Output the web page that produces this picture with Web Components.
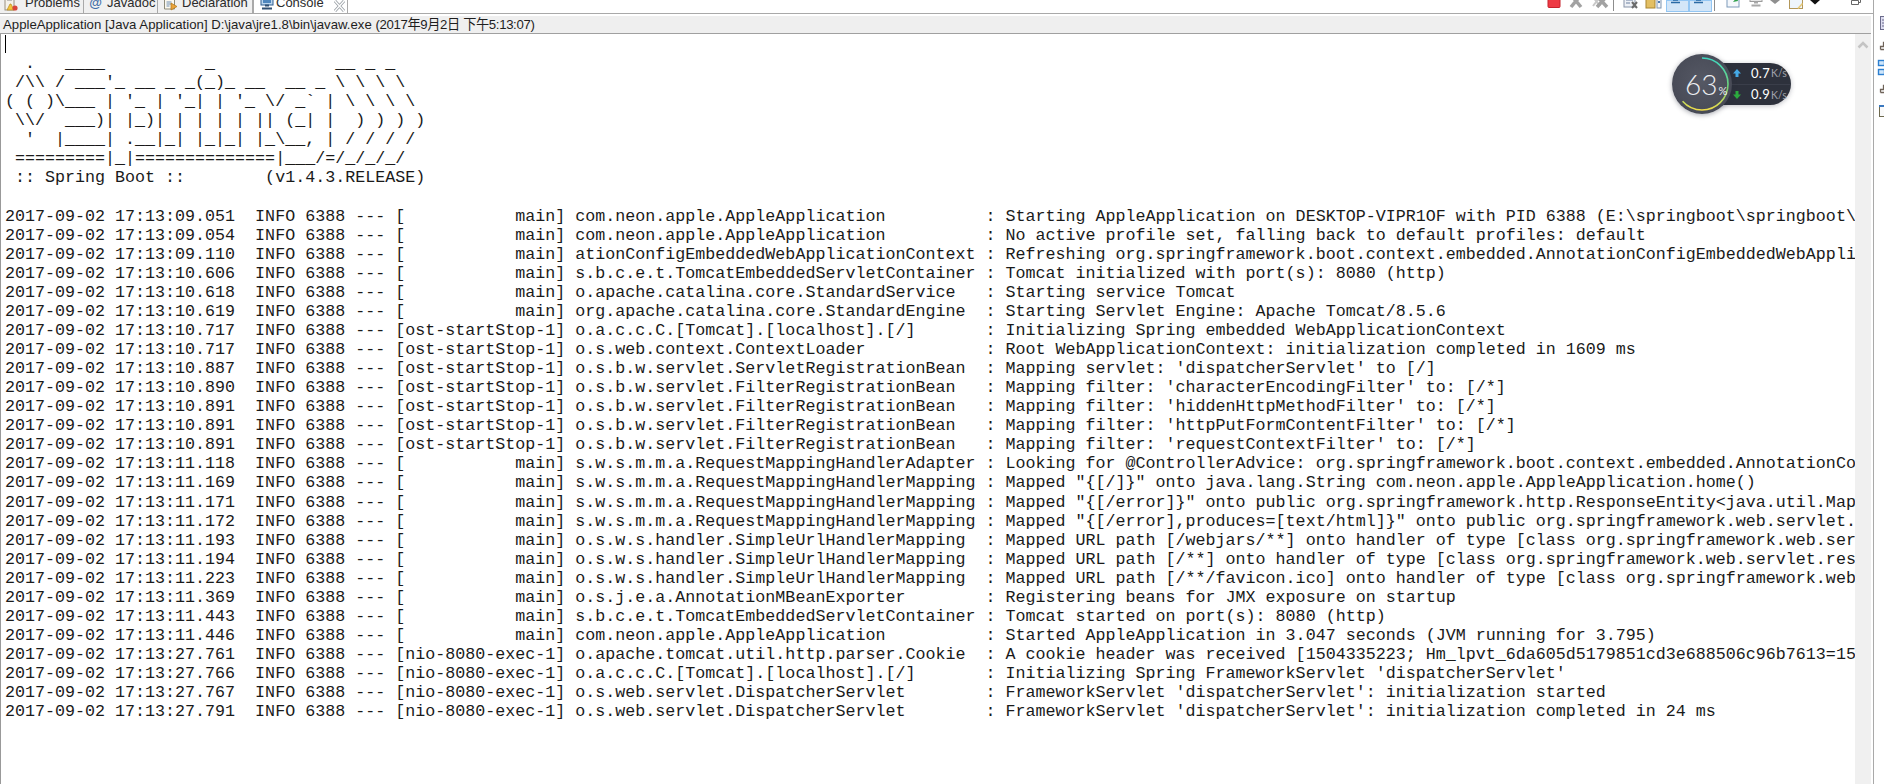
<!DOCTYPE html>
<html lang="en">
<head>
<meta charset="utf-8">
<title>Console</title>
<style>
    html, body { margin: 0; padding: 0; background: #fff; overflow: hidden; }
</style>
</head>
<body>
<ide-app>
    <view-tabs slot="tabs">
        <view-tab slot="tabs" w="84" pad="4" gap="7"><svg slot="icon" width="14" height="16" viewBox="0 0 14 16"><rect x="1" y="0" width="9" height="15" fill="#f4f1ea" stroke="#9a8f80"/><path d="M3 3h5M3 5h5" stroke="#8a8a8a"/><path d="M3 15l3-6h1l3 6z" fill="#f3c33c" stroke="#b58a1e" stroke-width=".7"/><circle cx="11" cy="13" r="2.6" fill="#d8453a"/></svg>Problems</view-tab>
        <view-tab slot="tabs" w="74" pad="5" gap="5"><span slot="icon" class="at" style="color:#3f6fa8;font:bold 13px/18px 'Liberation Sans',sans-serif;width:13px;display:block;text-align:center;margin-bottom:4px">@</span>Javadoc</view-tab>
        <view-tab slot="tabs" w="95" pad="5" gap="4"><svg slot="icon" width="15" height="16" viewBox="0 0 15 16"><path d="M1.500 1h7l3 3v10h-10z" fill="#fbf8ee" stroke="#8d8a78"/><path d="M3.500 7h5M3.500 9h5M3.500 11h3" stroke="#6f8fb5"/><path d="M8 8l6 3.500-6 3.500z" fill="#eaa43c" stroke="#b27516" stroke-width=".7"/></svg>Declaration</view-tab>
        <view-tab slot="tabs" w="95" pad="6" gap="2" active close><svg slot="icon" width="14" height="16" viewBox="0 0 14 16"><rect x="1" y="0" width="12" height="10" fill="#bcd6ee" stroke="#2f5f92"/><rect x="3" y="2" width="8" height="6" fill="#4e86bd"/><path d="M5 10.500h4M2 13.500h10" stroke="#2f4f72" stroke-width="2"/></svg>Console</view-tab>
    </view-tabs>
    <view-toolbar slot="tabs">
        <tool-icon><svg width="16" height="16" viewBox="0 0 16 16"><rect x="2" y="0" width="12" height="14.500" rx="1" fill="#ee3a44" stroke="#c5222c"/></svg></tool-icon>
        <tool-icon><svg width="16" height="16" viewBox="0 0 16 16"><path d="M3 2l10 12M13 2L3 14" stroke="#a2a2a2" stroke-width="3.500"/></svg></tool-icon>
        <tool-icon style="margin-left:2px"><svg width="18" height="16" viewBox="0 0 18 16"><path d="M2 4l7 9M9 4l-7 9" stroke="#c8c8c8" stroke-width="2"/><path d="M6 3l10 11M16 3L6 14" stroke="#a2a2a2" stroke-width="3.500"/></svg></tool-icon>
        <tool-sep></tool-sep>
        <tool-icon style="margin-left:4px"><svg width="16" height="16" viewBox="0 0 16 16"><rect x="1" y="0" width="11" height="14" fill="#eef1f6" stroke="#8793a8"/><path d="M3 4h7M3 7h7M3 10h4" stroke="#6d80a0"/><path d="M9 9l5 6M14 9l-5 6" stroke="#6b6b6b" stroke-width="2"/></svg></tool-icon>
        <tool-icon><svg width="17" height="17" viewBox="0 0 17 17"><rect x="1" y="6" width="9" height="9" fill="#e3bf63" stroke="#a98530"/><path d="M3 7V4a2.500 2.500 0 0 1 5 0v3" fill="none" stroke="#9a9a9a" stroke-width="1.300"/><rect x="12" y="0" width="4" height="15" fill="#f2f5f9" stroke="#7f93ad"/><rect x="13" y="8" width="2" height="2" fill="#4f7bb0"/></svg></tool-icon>
        <tool-icon active style="margin-left:2px"><svg width="17" height="16" viewBox="0 0 17 16"><rect x="1" y="-4" width="11" height="9" fill="#cfe4f7" stroke="#2f6da6"/><rect x="6" y="-6" width="10" height="7" fill="#eef4fb" stroke="#6f97bf"/><path d="M4 7h5M2 9.500h9" stroke="#2a6aa5" stroke-width="1.600"/></svg></tool-icon>
        <tool-icon active><svg width="17" height="16" viewBox="0 0 17 16"><rect x="1" y="-4" width="11" height="9" fill="#cfe4f7" stroke="#2f6da6"/><rect x="6" y="-6" width="10" height="7" fill="#eef4fb" stroke="#6f97bf"/><rect x="8" y="-3" width="6" height="4" fill="#e0353f"/><path d="M4 7h5M2 9.500h9" stroke="#2a6aa5" stroke-width="1.600"/></svg></tool-icon>
        <tool-sep></tool-sep>
        <tool-icon style="margin-left:5px"><svg width="16" height="16" viewBox="0 0 16 16"><rect x="2" y="-2" width="12" height="16" fill="#f5f8fc" stroke="#7d9ab9"/><rect x="2" y="-2" width="12" height="9" fill="#3c8ccf"/><path d="M8 9l4-5 1 4z" fill="#2fa04a"/></svg></tool-icon>
        <tool-icon style="margin-left:1px"><svg width="16" height="16" viewBox="0 0 16 16"><rect x="2" y="0" width="12" height="8.500" fill="#e6e6e6" stroke="#9c9c9c"/><path d="M6 9.500h4M3.500 12.500h9" stroke="#a8a8a8" stroke-width="2"/></svg></tool-icon>
        <tool-icon w="16"><svg width="10" height="16" viewBox="0 0 10 16"><path d="M0 7h10L5 11z" fill="#8f8f8f"/></svg></tool-icon>
        <tool-icon style="margin-left:2px"><svg width="16" height="16" viewBox="0 0 16 16"><rect x="1.500" y="-2" width="13" height="17.500" fill="#eef5fc" stroke="#b3975a"/><path d="M10 15.500l4.500-5" stroke="#e5c878" stroke-width="1.500"/></svg></tool-icon>
        <tool-icon w="16"><svg width="10" height="16" viewBox="0 0 10 16"><path d="M0 7h10L5 11.500z" fill="#111"/></svg></tool-icon>
        <tool-icon style="margin-left:22px"><svg width="10" height="16" viewBox="0 0 10 16"><path d="M.500 7.500h7v4h-7z" fill="#fff" stroke="#666"/><path d="M3 7V5.500h6.500v4H7.500" fill="none" stroke="#666"/></svg></tool-icon>
    </view-toolbar>
    <console-bar slot="bar">AppleApplication [Java Application] D:\java\jre1.8\bin\javaw.exe <span style="letter-spacing:-.35px">(2017年9月2日 下午5:13:07)</span></console-bar>
    <console-output slot="output">
        <log-text>  .   ____          _            __ _ _</log-text>
        <log-text> /\\ / ___'_ __ _ _(_)_ __  __ _ \ \ \ \</log-text>
        <log-text>( ( )\___ | '_ | '_| | '_ \/ _` | \ \ \ \</log-text>
        <log-text> \\/  ___)| |_)| | | | | || (_| |  ) ) ) )</log-text>
        <log-text>  '  |____| .__|_| |_|_| |_\__, | / / / /</log-text>
        <log-text> =========|_|==============|___/=/_/_/_/</log-text>
        <log-text> :: Spring Boot ::        (v1.4.3.RELEASE)</log-text>
        <log-text></log-text>
        <log-line t="2017-09-02 17:13:09.051" th="main" lg="com.neon.apple.AppleApplication">Starting AppleApplication on DESKTOP-VIPR1OF with PID 6388 (E:\springboot\springboot\</log-line>
        <log-line t="2017-09-02 17:13:09.054" th="main" lg="com.neon.apple.AppleApplication">No active profile set, falling back to default profiles: default</log-line>
        <log-line t="2017-09-02 17:13:09.110" th="main" lg="ationConfigEmbeddedWebApplicationContext">Refreshing org.springframework.boot.context.embedded.AnnotationConfigEmbeddedWebAppli</log-line>
        <log-line t="2017-09-02 17:13:10.606" th="main" lg="s.b.c.e.t.TomcatEmbeddedServletContainer">Tomcat initialized with port(s): 8080 (http)</log-line>
        <log-line t="2017-09-02 17:13:10.618" th="main" lg="o.apache.catalina.core.StandardService">Starting service Tomcat</log-line>
        <log-line t="2017-09-02 17:13:10.619" th="main" lg="org.apache.catalina.core.StandardEngine">Starting Servlet Engine: Apache Tomcat/8.5.6</log-line>
        <log-line t="2017-09-02 17:13:10.717" th="ost-startStop-1" lg="o.a.c.c.C.[Tomcat].[localhost].[/]">Initializing Spring embedded WebApplicationContext</log-line>
        <log-line t="2017-09-02 17:13:10.717" th="ost-startStop-1" lg="o.s.web.context.ContextLoader">Root WebApplicationContext: initialization completed in 1609 ms</log-line>
        <log-line t="2017-09-02 17:13:10.887" th="ost-startStop-1" lg="o.s.b.w.servlet.ServletRegistrationBean">Mapping servlet: 'dispatcherServlet' to [/]</log-line>
        <log-line t="2017-09-02 17:13:10.890" th="ost-startStop-1" lg="o.s.b.w.servlet.FilterRegistrationBean">Mapping filter: 'characterEncodingFilter' to: [/*]</log-line>
        <log-line t="2017-09-02 17:13:10.891" th="ost-startStop-1" lg="o.s.b.w.servlet.FilterRegistrationBean">Mapping filter: 'hiddenHttpMethodFilter' to: [/*]</log-line>
        <log-line t="2017-09-02 17:13:10.891" th="ost-startStop-1" lg="o.s.b.w.servlet.FilterRegistrationBean">Mapping filter: 'httpPutFormContentFilter' to: [/*]</log-line>
        <log-line t="2017-09-02 17:13:10.891" th="ost-startStop-1" lg="o.s.b.w.servlet.FilterRegistrationBean">Mapping filter: 'requestContextFilter' to: [/*]</log-line>
        <log-line t="2017-09-02 17:13:11.118" th="main" lg="s.w.s.m.m.a.RequestMappingHandlerAdapter">Looking for @ControllerAdvice: org.springframework.boot.context.embedded.AnnotationCo</log-line>
        <log-line t="2017-09-02 17:13:11.169" th="main" lg="s.w.s.m.m.a.RequestMappingHandlerMapping">Mapped "{[/]}" onto java.lang.String com.neon.apple.AppleApplication.home()</log-line>
        <log-line t="2017-09-02 17:13:11.171" th="main" lg="s.w.s.m.m.a.RequestMappingHandlerMapping">Mapped "{[/error]}" onto public org.springframework.http.ResponseEntity&lt;java.util.Map</log-line>
        <log-line t="2017-09-02 17:13:11.172" th="main" lg="s.w.s.m.m.a.RequestMappingHandlerMapping">Mapped "{[/error],produces=[text/html]}" onto public org.springframework.web.servlet.</log-line>
        <log-line t="2017-09-02 17:13:11.193" th="main" lg="o.s.w.s.handler.SimpleUrlHandlerMapping">Mapped URL path [/webjars/**] onto handler of type [class org.springframework.web.ser</log-line>
        <log-line t="2017-09-02 17:13:11.194" th="main" lg="o.s.w.s.handler.SimpleUrlHandlerMapping">Mapped URL path [/**] onto handler of type [class org.springframework.web.servlet.res</log-line>
        <log-line t="2017-09-02 17:13:11.223" th="main" lg="o.s.w.s.handler.SimpleUrlHandlerMapping">Mapped URL path [/**/favicon.ico] onto handler of type [class org.springframework.web</log-line>
        <log-line t="2017-09-02 17:13:11.369" th="main" lg="o.s.j.e.a.AnnotationMBeanExporter">Registering beans for JMX exposure on startup</log-line>
        <log-line t="2017-09-02 17:13:11.443" th="main" lg="s.b.c.e.t.TomcatEmbeddedServletContainer">Tomcat started on port(s): 8080 (http)</log-line>
        <log-line t="2017-09-02 17:13:11.446" th="main" lg="com.neon.apple.AppleApplication">Started AppleApplication in 3.047 seconds (JVM running for 3.795)</log-line>
        <log-line t="2017-09-02 17:13:27.761" th="nio-8080-exec-1" lg="o.apache.tomcat.util.http.parser.Cookie">A cookie header was received [1504335223; Hm_lpvt_6da605d5179851cd3e688506c96b7613=15</log-line>
        <log-line t="2017-09-02 17:13:27.766" th="nio-8080-exec-1" lg="o.a.c.c.C.[Tomcat].[localhost].[/]">Initializing Spring FrameworkServlet 'dispatcherServlet'</log-line>
        <log-line t="2017-09-02 17:13:27.767" th="nio-8080-exec-1" lg="o.s.web.servlet.DispatcherServlet">FrameworkServlet 'dispatcherServlet': initialization started</log-line>
        <log-line t="2017-09-02 17:13:27.791" th="nio-8080-exec-1" lg="o.s.web.servlet.DispatcherServlet">FrameworkServlet 'dispatcherServlet': initialization completed in 24 ms</log-line>
    </console-output>
    <side-strip slot="side"></side-strip>
    <net-gauge slot="gauge" percent="63" up="0.7" down="0.9"></net-gauge>
</ide-app>

<script>
/* Cada elemento sigue el mismo esquema: getTemplate() + getStyles() + render() */
class BaseElement extends HTMLElement {
    constructor() {
        super();
        this.attachShadow({ mode: "open" });
    }
    getTemplate() {
        const template = document.createElement("template");
        template.innerHTML = `${this.getMarkup()}<style>${this.getStyles()}</style>`;
        return template;
    }
    getMarkup() {
        return `<slot></slot>`;
    }
    getStyles() {
        return ``;
    }
    render() {
        this.shadowRoot.appendChild(this.getTemplate().content.cloneNode(true));
    }
    connectedCallback() {
        this.render();
    }
}

class IdeApp extends BaseElement {
    getMarkup() {
        return `
            <div class="main">
                <div class="top"><slot name="tabs"></slot></div>
                <slot name="bar"></slot>
                <slot name="output"></slot>
            </div>
            <slot name="side"></slot>
            <slot name="gauge"></slot>
        `;
    }
    getStyles() {
        return `
            :host { display: flex; position: relative; width: 1884px; height: 784px; overflow: hidden; background: #fff; }
            .main { flex: 1; min-width: 0; display: flex; flex-direction: column; }
            .top { display: flex; justify-content: space-between; height: 13px; border-bottom: 1px solid #a9a9a9; background: #fff; }
        `;
    }
}

class ViewTabs extends BaseElement {
    getMarkup() {
        return `<slot name="tabs"></slot>`;
    }
    getStyles() {
        return `:host { display: flex; height: 13px; overflow: hidden; }`;
    }
}

class ViewTab extends BaseElement {
    getMarkup() {
        const close = this.hasAttribute("close")
            ? `<svg class="close" width="13" height="16" viewBox="0 0 13 16"><path d="M2 1l9 10M11 1L2 11" stroke="#9aa0a6" stroke-width="3"/><path d="M2 1l9 10M11 1L2 11" stroke="#fff" stroke-width="1.300"/></svg>`
            : ``;
        return `<span class="ico"><slot name="icon"></slot></span><span class="txt"><slot></slot></span>${close}`;
    }
    getStyles() {
        const w = this.getAttribute("w");
        const pad = this.getAttribute("pad");
        const gap = this.getAttribute("gap");
        const active = this.hasAttribute("active");
        return `
            :host {
                display: flex; align-items: flex-end; box-sizing: border-box; flex: none; width: ${w}px; height: 13px;
                padding-left: ${pad}px; gap: ${gap}px; background: ${active ? "#fff" : "#f0f0f0"};
                border-right: 1px solid #a9a9a9; ${active ? "border-left: 1px solid #a9a9a9;" : ""}
                font: 13px/18px "Liberation Sans", sans-serif; color: #2b2b2b; white-space: nowrap;
            }
            .ico { display: block; flex: none; margin-bottom: -3px; }
            .txt { display: block; margin-bottom: 1px; }
            .close { flex: none; margin-left: 7px; margin-bottom: -3px; }
        `;
    }
}

class ViewToolbar extends BaseElement {
    getStyles() {
        return `:host { display: flex; height: 13px; overflow: hidden; padding-right: 6px; }`;
    }
}

class ToolIcon extends BaseElement {
    getMarkup() {
        return `<slot></slot>`;
    }
    getStyles() {
        const w = this.getAttribute("w") || (this.hasAttribute("active") ? 23 : 22);
        const active = this.hasAttribute("active");
        return `
            :host {
                display: flex; justify-content: center; box-sizing: border-box; flex: none; width: ${w}px; height: ${active ? 12 : 13}px;
                ${active ? "background: #d3e6f8; box-shadow: inset 0 0 0 1px #93c6f3;" : ""}
            }
            ::slotted(svg) { display: block; margin-top: -7px; flex: none; overflow: visible; }
        `;
    }
}

class ToolSep extends BaseElement {
    getMarkup() {
        return ``;
    }
    getStyles() {
        return `:host { display: block; flex: none; width: 1px; height: 11px; margin: 0 2px; background: #8d8d8d; }`;
    }
}

class ConsoleBar extends BaseElement {
    getStyles() {
        return `
            :host {
                display: block; box-sizing: border-box; height: 20px; margin-right: 2px; padding-left: 3px;
                background: linear-gradient(#fff 0 2px, #efefef 2px); border-bottom: 1px solid #a0a0a0;
                font: 13.2px/22px "Liberation Sans", "Noto Sans CJK SC", sans-serif; color: #1e1e1e; white-space: nowrap; overflow: hidden;
            }
        `;
    }
}

class ConsoleOutput extends BaseElement {
    getMarkup() {
        return `
            <div class="text">
                <div class="first"><i></i></div>
                <slot></slot>
            </div>
            <div class="bar"><svg width="16" height="14" viewBox="0 0 16 14"><path d="M3.500 9.500L8 5l4.500 4.500" fill="none" stroke="#c4c4c4" stroke-width="2.500"/></svg></div>
        `;
    }
    getStyles() {
        return `
            :host {
                display: flex; flex: 1; min-height: 0; padding-right: 2px; border-left: 1px solid #999;
                font: 16.68px/19.07px "Liberation Mono", monospace; color: #1a1a1a;
            }
            .text { flex: 1; min-width: 0; overflow: hidden; padding: 1px 0 0 4px; }
            .first { height: 19.07px; }
            .first i { display: block; width: 1px; height: 18px; background: #000; }
            .bar { flex: none; width: 16px; background: #f0f0f0; padding-top: 4px; }
            .bar svg { display: block; }
        `;
    }
}

class LogText extends BaseElement {
    getStyles() {
        return `:host { display: block; height: 19.07px; white-space: pre; }`;
    }
}

class LogLine extends BaseElement {
    getMarkup() {
        const t = this.getAttribute("t");
        const th = this.getAttribute("th").padStart(15, " ");
        const lg = this.getAttribute("lg").padEnd(40, " ");
        return `<span>${t}  INFO 6388 --- [${th}] ${lg} : </span><slot></slot>`;
    }
    getStyles() {
        return `:host { display: block; height: 19.07px; white-space: pre; }`;
    }
}

class SideStrip extends BaseElement {
    getMarkup() {
        return `
            <svg width="10" height="125" viewBox="0 0 10 125">
                <rect x="6.500" y="16.500" width="8" height="13" fill="#dcdcf0" stroke="#6a6a8a"/>
                <path d="M8 20h5M8 23h5M8 26h5" stroke="#6a6a8a"/>
                <path d="M6.500 49.500v-3h3v-4h4M6.500 49.500h8" fill="none" stroke="#6e6258" stroke-width="1.300"/>
                <rect x="4.500" y="60.500" width="6" height="5" fill="#cfe6fb" stroke="#2c7fd0" stroke-width="1.400"/>
                <rect x="4.500" y="69.500" width="6" height="5" fill="#cfe6fb" stroke="#2c7fd0" stroke-width="1.400"/>
                <path d="M6.500 92.500v-3h3v-4h4M6.500 92.500h8" fill="none" stroke="#6e6258" stroke-width="1.300"/>
                <rect x="5.500" y="105.500" width="8" height="11" fill="#fafafa" stroke="#6e6a50"/>
                <rect x="5" y="105" width="9" height="2" fill="#3a78bf"/>
            </svg>
        `;
    }
    getStyles() {
        return `
            :host { display: block; flex: none; box-sizing: border-box; width: 11px; height: 784px; border-left: 1px solid #a9a9a9; overflow: hidden; background: #fff; }
            svg { display: block; }
        `;
    }
}

class NetGauge extends BaseElement {
    getMarkup() {
        const pct = Number(this.getAttribute("percent"));
        const c = 2 * Math.PI * 26;
        return `
            <div class="pill">
                <div class="row"><svg width="10" height="10" viewBox="0 0 10 10"><path d="M5 1l4 4.500H6.500V9h-3V5.500H1z" fill="#45a9e6"/></svg><b>${this.getAttribute("up")}</b><em>K/s</em></div>
                <div class="row"><svg width="10" height="10" viewBox="0 0 10 10"><path d="M5 9l4-4.500H6.500V1h-3v3.500H1z" fill="#2cab3e"/></svg><b>${this.getAttribute("down")}</b><em>K/s</em></div>
            </div>
            <div class="dial">
                <svg width="60" height="60" viewBox="0 0 60 60">
                    <defs><linearGradient id="ring" x1="1" y1="0" x2="0" y2="0">
                        <stop offset="0" stop-color="#3fd6c0"/><stop offset=".55" stop-color="#6fd27a"/><stop offset="1" stop-color="#efdc4a"/>
                    </linearGradient></defs>
                    <circle cx="30" cy="30" r="26" fill="none" stroke="url(#ring)" stroke-width="1.600"
                        stroke-dasharray="${c * pct / 100} ${c}" transform="rotate(-90 30 30)"/>
                </svg>
                <span class="num">${pct}<small>%</small></span>
            </div>
        `;
    }
    getStyles() {
        return `
            :host { display: block; position: absolute; left: 1672px; top: 54px; width: 120px; height: 60px; font-family: "Lato", "Open Sans", sans-serif; }
            .pill {
                position: absolute; left: 44px; top: 9px; box-sizing: border-box; width: 75px; height: 42px; padding-left: 16px;
                display: flex; flex-direction: column; border-radius: 0 21px 21px 0; background: #2d313c;
                box-shadow: 0 1px 5px rgba(40,44,60,.3);
            }
            .row { flex: 1; display: flex; align-items: center; color: #fff; }
            .row + .row { border-top: 1px solid #3a3e4a; }
            .row svg { flex: none; margin-right: 9px; }
            b { font: 400 13px/1 "Lato", "Open Sans", sans-serif; letter-spacing: .3px; }
            em { font: 400 10.5px/1 "Lato", "Open Sans", sans-serif; color: #a0a2ab; margin-left: 1px; }
            .dial {
                position: absolute; left: 0; top: 0; width: 60px; height: 60px; border-radius: 50%;
                background: radial-gradient(circle at 50% 45%, #555864 0, #4a4d59 60%, #3f424d 100%);
                box-shadow: 0 1px 5px rgba(40,44,60,.4);
            }
            .dial svg { display: block; }
            .num { position: absolute; left: 13px; top: 15px; color: #eceef2; font: 300 28px/30px "Lato", "Open Sans", sans-serif; white-space: nowrap; }
            small { font: 400 11px/1 "Lato", "Open Sans", sans-serif; margin-left: 1px; }
        `;
    }
}

customElements.define("ide-app", IdeApp);
customElements.define("view-tabs", ViewTabs);
customElements.define("view-tab", ViewTab);
customElements.define("view-toolbar", ViewToolbar);
customElements.define("tool-icon", ToolIcon);
customElements.define("tool-sep", ToolSep);
customElements.define("console-bar", ConsoleBar);
customElements.define("console-output", ConsoleOutput);
customElements.define("log-text", LogText);
customElements.define("log-line", LogLine);
customElements.define("side-strip", SideStrip);
customElements.define("net-gauge", NetGauge);
</script>
</body>
</html>
